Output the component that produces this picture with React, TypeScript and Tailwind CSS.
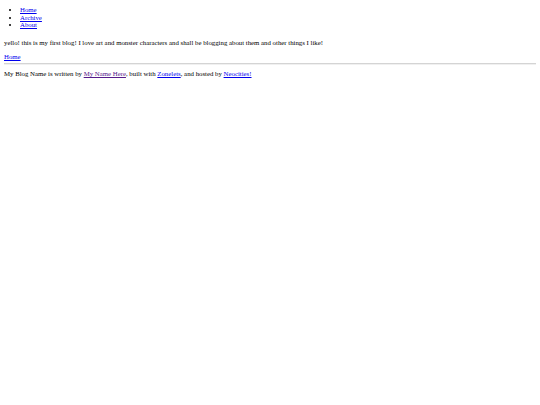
export default function App() {
  return (
    <div className="min-h-[405px] bg-white px-[4px] py-[4px] text-[6.8px] leading-[7.5px] text-black [font-family:'Liberation_Serif','Times_New_Roman',serif]">
      {/* header nav */}
      <ul className="mt-[2px] mb-[10px] list-disc pl-[16px]">
        <li><a href="#" className="text-[#0000ee] underline">Home</a></li>
        <li><a href="#" className="text-[#0000ee] underline">Archive</a></li>
        <li><a href="#" className="text-[#0000ee] underline">About</a></li>
      </ul>

      <p className="mb-[6.5px]">
        yello! this is my first blog! I love art and monster characters and shall be blogging about them and other things I like!
      </p>
      <p>
        <a href="#" className="text-[#0000ee] underline">Home</a>
      </p>

      {/* footer */}
      <hr className="mt-[3px] mb-[5px] border-t-[1px] border-b-[1px] border-t-[#d4d4d4] border-b-[#f0f0f0]" />
      <p>
        My Blog Name is written by{" "}
        <a href="#" className="text-[#551a8b] underline">My Name Here</a>, built with{" "}
        <a href="#" className="text-[#0000ee] underline">Zonelets</a>, and hosted by{" "}
        <a href="#" className="text-[#0000ee] underline">Neocities!</a>
      </p>
    </div>
  );
}
